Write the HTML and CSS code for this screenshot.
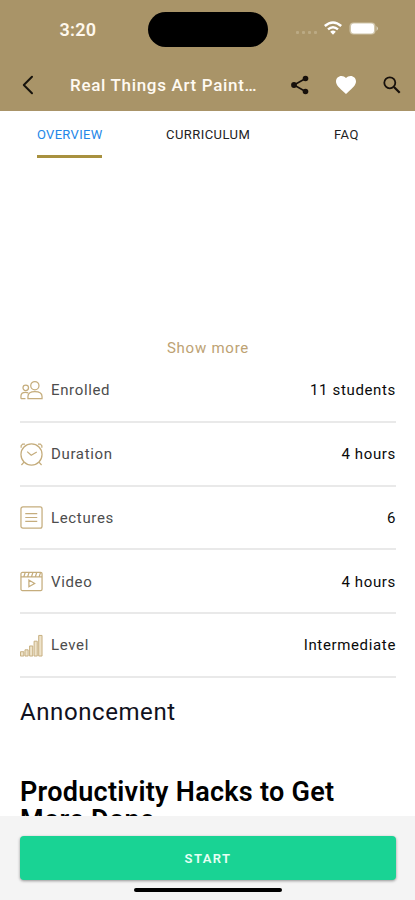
FILE: index.html
```html
<!DOCTYPE html>
<html lang="en">
<head>
<meta charset="utf-8">
<title>Real Things Art Painting</title>
<link rel="stylesheet" href="styles.css">
</head>
<body>
<div class="app">
  <header class="header">
    <div class="status">
      <span class="time">3:20</span>
      <span class="island"></span>
      <span class="signals">
        <span class="dots"><i></i><i></i><i></i><i></i></span>
        <svg class="wifi" width="18" height="14" viewBox="0 0 18 14" fill="none" stroke="#fff" stroke-width="2.400"><path d="M.8 5Q9-2.200 17.200 5M4 8.400Q9 4 14 8.400"/><path d="M6.200 10.800Q9 8.400 11.800 10.800L9 13.700Z" fill="#fff" stroke="none"/></svg>
        <svg class="battery" width="30" height="13" viewBox="0 0 30 13"><rect x=".5" y=".5" width="26" height="12" rx="4" fill="#cfc4a8"/><rect x="2" y="1.500" width="23" height="10" rx="3" fill="#fff"/><path d="M27.500 4Q30.500 6.500 27.500 9Z" fill="#d9d0ba"/></svg>
      </span>
    </div>
    <nav class="nav">
      <svg class="back" width="12" height="20" viewBox="0 0 12 20" fill="none" stroke="#17130c" stroke-width="2" stroke-linecap="round" stroke-linejoin="round"><path d="M10 1.800 1.800 10 10 18.200"/></svg>
      <h1 class="title">Real Things Art Paint…</h1>
      <svg class="share" width="20" height="20" viewBox="0 0 20 20" fill="#17100b"><path d="M15.500 3.500 4 10l11.500 6.500" fill="none" stroke="#17100b" stroke-width="1.600"/><circle cx="15.500" cy="3.500" r="2.800"/><circle cx="4" cy="10" r="2.900"/><circle cx="15.500" cy="16.500" r="2.800"/></svg>
      <svg class="heart" width="20" height="18" viewBox="0 0 20 18" fill="#fff"><path d="M10 18 8.600 16.700C3.400 12 0 9 0 5.400 0 2.300 2.400 0 5.500 0 7.200 0 8.900.8 10 2c1.100-1.200 2.800-2 4.500-2C17.600 0 20 2.300 20 5.400c0 3.600-3.400 6.600-8.600 11.300Z"/></svg>
      <svg class="search" width="18" height="18" viewBox="0 0 18 18" fill="none" stroke="#17100b"><circle cx="6.800" cy="6.800" r="5.500" stroke-width="1.800"/><path d="m11 11 5.700 5.700" stroke-width="2.200"/></svg>
    </nav>
  </header>
  <div class="tabs">
    <span class="tab active">OVERVIEW</span>
    <span class="tab curriculum">CURRICULUM</span>
    <span class="tab faq">FAQ</span>
  </div>
  <main class="content">
    <div class="more">Show more</div>
    <ul class="facts">
      <li class="fact">
        <svg class="icon" viewBox="0 0 24 24"><circle cx="15.500" cy="7" r="4.300"/><path d="M8.300 20.500v-2.200c0-3.400 3-5.100 7.200-5.100s7.500 1.700 7.500 5.100v2.200Z"/><circle cx="6" cy="9.200" r="2.900"/><path d="M1 20.500v-2.700c0-2.600 2-3.900 4.700-3.900 1.200 0 2.100.2 2.900.6M1 20.500h4.700"/></svg>
        <span class="label">Enrolled</span><span class="value">11 students</span>
      </li>
      <li class="fact">
        <svg class="icon" viewBox="0 0 24 24"><circle cx="12" cy="12" r="11"/><path d="m7.500 9 4.200 3.800 5.800-3.500M1.200 5V2.800L2.800 1.200h2.400M22.800 5V2.800l-1.600-1.600h-2.400M4.200 20l-2.700 3M19.800 20l2.700 3"/></svg>
        <span class="label">Duration</span><span class="value">4 hours</span>
      </li>
      <li class="fact">
        <svg class="icon" viewBox="0 0 24 24"><rect x="1" y="1" width="22" height="22" rx="2"/><path d="M5.500 8H18M5.500 12H18M5.500 16H18"/></svg>
        <span class="label">Lectures</span><span class="value">6</span>
      </li>
      <li class="fact">
        <svg class="icon" viewBox="0 0 24 24"><rect x="1" y="2.500" width="22" height="19" rx="1.500"/><path d="M1 7.300h22M4 7l1.500-4.500M8 7l1.500-4.500M12 7l1.500-4.500M16 7l1.500-4.500M20 7l1.500-4.500M9.300 10.500v7l6-3.500Z"/></svg>
        <span class="label">Video</span><span class="value">4 hours</span>
      </li>
      <li class="fact">
        <svg class="icon bars" viewBox="0 0 24 24"><path d="M.5 18.500H4V23H.5ZM5.200 16.500h3.300V23H5.200ZM10 12.500h3.300V23H10ZM14.700 7.500H18V23h-3.300ZM19.500 1.500H23V23h-3.500Z"/></svg>
        <span class="label">Level</span><span class="value">Intermediate</span>
      </li>
    </ul>
    <h2 class="section">Annoncement</h2>
    <h3 class="headline">Productivity Hacks to Get<br>More Done</h3>
  </main>
  <footer class="footer">
    <button class="start">START</button>
    <span class="home"></span>
  </footer>
</div>
</body>
</html>
```
FILE: styles.css
```css
* { box-sizing: border-box; }
body { margin: 0; font-family: Roboto, sans-serif; background: #fff; color: #000; }
.app { width: 415px; height: 900px; display: flex; flex-direction: column; overflow: hidden; }
.header { height: 111px; flex: none; background: #a99468; }
.status { height: 58px; display: grid; grid-template-columns: 148px 120px 1fr; align-items: center; }
.time { padding-left: 59.5px; color: #fff8ed; font-size: 18px; font-weight: 600; letter-spacing: .3px; }
.island { height: 35px; border-radius: 18px; background: #000; }
.signals { display: flex; align-items: center; padding-left: 28px; height: 56px; align-self: start; }
.dots { display: flex; gap: 3px; width: 28px; padding-top: 9px; }
.dots i { width: 3px; height: 3px; border-radius: 1px; background: #bbaa84; }
.battery { margin-left: 7px; }
.nav { height: 53px; display: flex; align-items: center; }
.back { margin-left: 22px; }
.title { margin: 0 0 0 36px; width: 220px; font-size: 17px; font-weight: 500; letter-spacing: .68px; color: #fffaf2; white-space: nowrap; }
.heart { margin-left: 26px; }
.search { margin-left: 27px; }
.tabs { height: 47px; flex: none; display: grid; grid-template-columns: 65px 84px 26px; column-gap: 64px; padding-left: 37px; font-size: 13px; color: #222; }
.tab { height: 47px; line-height: 47px; white-space: nowrap; letter-spacing: .45px; }
.active { color: #2487e8; border-bottom: 3px solid #a8913f; letter-spacing: .3px; }
.faq { margin-left: 20px; }
.content { flex: 1; min-height: 0; overflow: hidden; padding: 180px 19px 0 20px; }
.more { height: 21px; line-height: 21px; text-align: center; font-size: 15px; letter-spacing: .75px; color: #bda273; }
.facts { list-style: none; margin: 0; padding: 0; }
.fact { height: 63.75px; padding-top: 1px; display: flex; align-items: center; border-bottom: 2px solid #e9e9e9; }
.icon { width: 23px; height: 23px; margin-right: 8px; fill: none; stroke: #c5ad7d; stroke-width: 1.3; }
.bars { fill: #eee3ca; stroke-width: 1; }
.label { font-size: 15px; letter-spacing: .65px; color: #4d4d4d; }
.value { margin-left: auto; font-size: 15px; letter-spacing: .65px; color: #0a0a0a; }
.section { margin: 19px 0 0; font-size: 24px; line-height: 30px; font-weight: 400; letter-spacing: .58px; color: #111120; }
.headline { margin: 51px 0 0; font-size: 27px; line-height: 28.5px; font-weight: 600; letter-spacing: .28px; }
.footer { height: 84px; flex: none; background: #f4f4f4; padding: 20px 19px 0 20px; display: flex; flex-direction: column; align-items: center; }
.start { width: 100%; height: 44px; flex: none; border: 0; border-radius: 4px; background: #19d394; color: #e8fff4; font: 600 13px Roboto, sans-serif; letter-spacing: 1.4px; box-shadow: 0 1px 3px #0006; }
.home { width: 148px; height: 4px; margin-top: 8px; border-radius: 3px; background: #000; }
```
